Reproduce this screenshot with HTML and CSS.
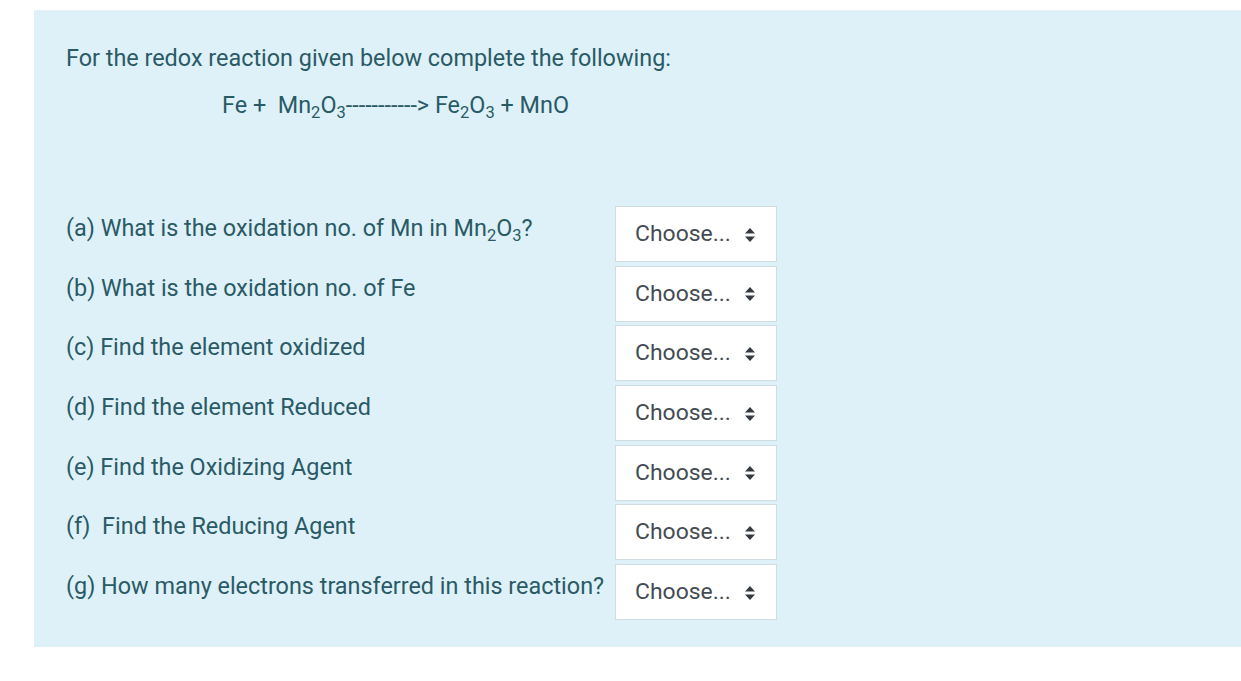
FILE: index.html
```html
<!DOCTYPE html>
<html>
<head>
<meta charset="utf-8">
<link rel="stylesheet" href="styles.css">
</head>
<body>
<div class="panel">
  <p class="title">For the redox reaction given below complete the following:</p>
  <p class="equation">Fe +&nbsp; Mn<sub>2</sub>O<sub>3</sub>-----------&gt; Fe<sub>2</sub>O<sub>3</sub> + MnO</p>
  <div class="grid">
    <div class="label">(a) What is the oxidation no. of Mn in Mn<sub>2</sub>O<sub>3</sub>?</div>
    <div class="select"><span>Choose...</span><svg width="10" height="14" viewBox="0 0 10 14"><path d="M5 0 L10 5.5 H0 Z M0 8.5 H10 L5 14 Z" fill="#343a40"/></svg></div>
    <div class="label">(b) What is the oxidation no. of Fe</div>
    <div class="select"><span>Choose...</span><svg width="10" height="14" viewBox="0 0 10 14"><path d="M5 0 L10 5.5 H0 Z M0 8.5 H10 L5 14 Z" fill="#343a40"/></svg></div>
    <div class="label">(c) Find the element oxidized</div>
    <div class="select"><span>Choose...</span><svg width="10" height="14" viewBox="0 0 10 14"><path d="M5 0 L10 5.5 H0 Z M0 8.5 H10 L5 14 Z" fill="#343a40"/></svg></div>
    <div class="label">(d) Find the element Reduced</div>
    <div class="select"><span>Choose...</span><svg width="10" height="14" viewBox="0 0 10 14"><path d="M5 0 L10 5.5 H0 Z M0 8.5 H10 L5 14 Z" fill="#343a40"/></svg></div>
    <div class="label">(e) Find the Oxidizing Agent</div>
    <div class="select"><span>Choose...</span><svg width="10" height="14" viewBox="0 0 10 14"><path d="M5 0 L10 5.5 H0 Z M0 8.5 H10 L5 14 Z" fill="#343a40"/></svg></div>
    <div class="label">(f)&nbsp; Find the Reducing Agent</div>
    <div class="select"><span>Choose...</span><svg width="10" height="14" viewBox="0 0 10 14"><path d="M5 0 L10 5.5 H0 Z M0 8.5 H10 L5 14 Z" fill="#343a40"/></svg></div>
    <div class="label">(g) How many electrons transferred in this reaction?</div>
    <div class="select"><span>Choose...</span><svg width="10" height="14" viewBox="0 0 10 14"><path d="M5 0 L10 5.5 H0 Z M0 8.5 H10 L5 14 Z" fill="#343a40"/></svg></div>
  </div>
</div>
</body>
</html>
```

FILE: styles.css
```css
html, body {
  margin: 0;
  padding: 0;
  background: #ffffff;
  overflow: hidden;
}
body {
  font-family: Roboto, "Liberation Sans", sans-serif;
  font-size: 23.4px;
  color: #2a5a65;
}
.panel {
  margin: 11px 0 0 34px;
  height: 636px;
  background: #def1f8;
  box-sizing: border-box;
  padding: 32px 32px 0 32px;
  box-shadow: 0 -1px 0 #e8f3f7;
}
.title {
  margin: 0;
  line-height: 30px;
}
.equation {
  margin: 17px 0 0 156px;
  line-height: 30px;
}
sub {
  font-size: 16.5px;
  vertical-align: -5px;
  line-height: 0;
}
.grid {
  margin-top: 86px;
  display: grid;
  grid-template-columns: auto auto;
  justify-content: start;
  column-gap: 11px;
  row-gap: 3.7px;
}
.label {
  padding-top: 7px;
  line-height: 30px;
}
.select {
  width: 162px;
  height: 56px;
  box-sizing: border-box;
  background: #ffffff;
  border: 1px solid #cfdde2;
  display: flex;
  align-items: center;
  padding: 1px 20px 0 19px;
  color: #444b52;
  font-size: 22.9px;
  gap: 14px;
}
.select span {
  line-height: 1;
}
.select svg {
  flex: none;
}
```
